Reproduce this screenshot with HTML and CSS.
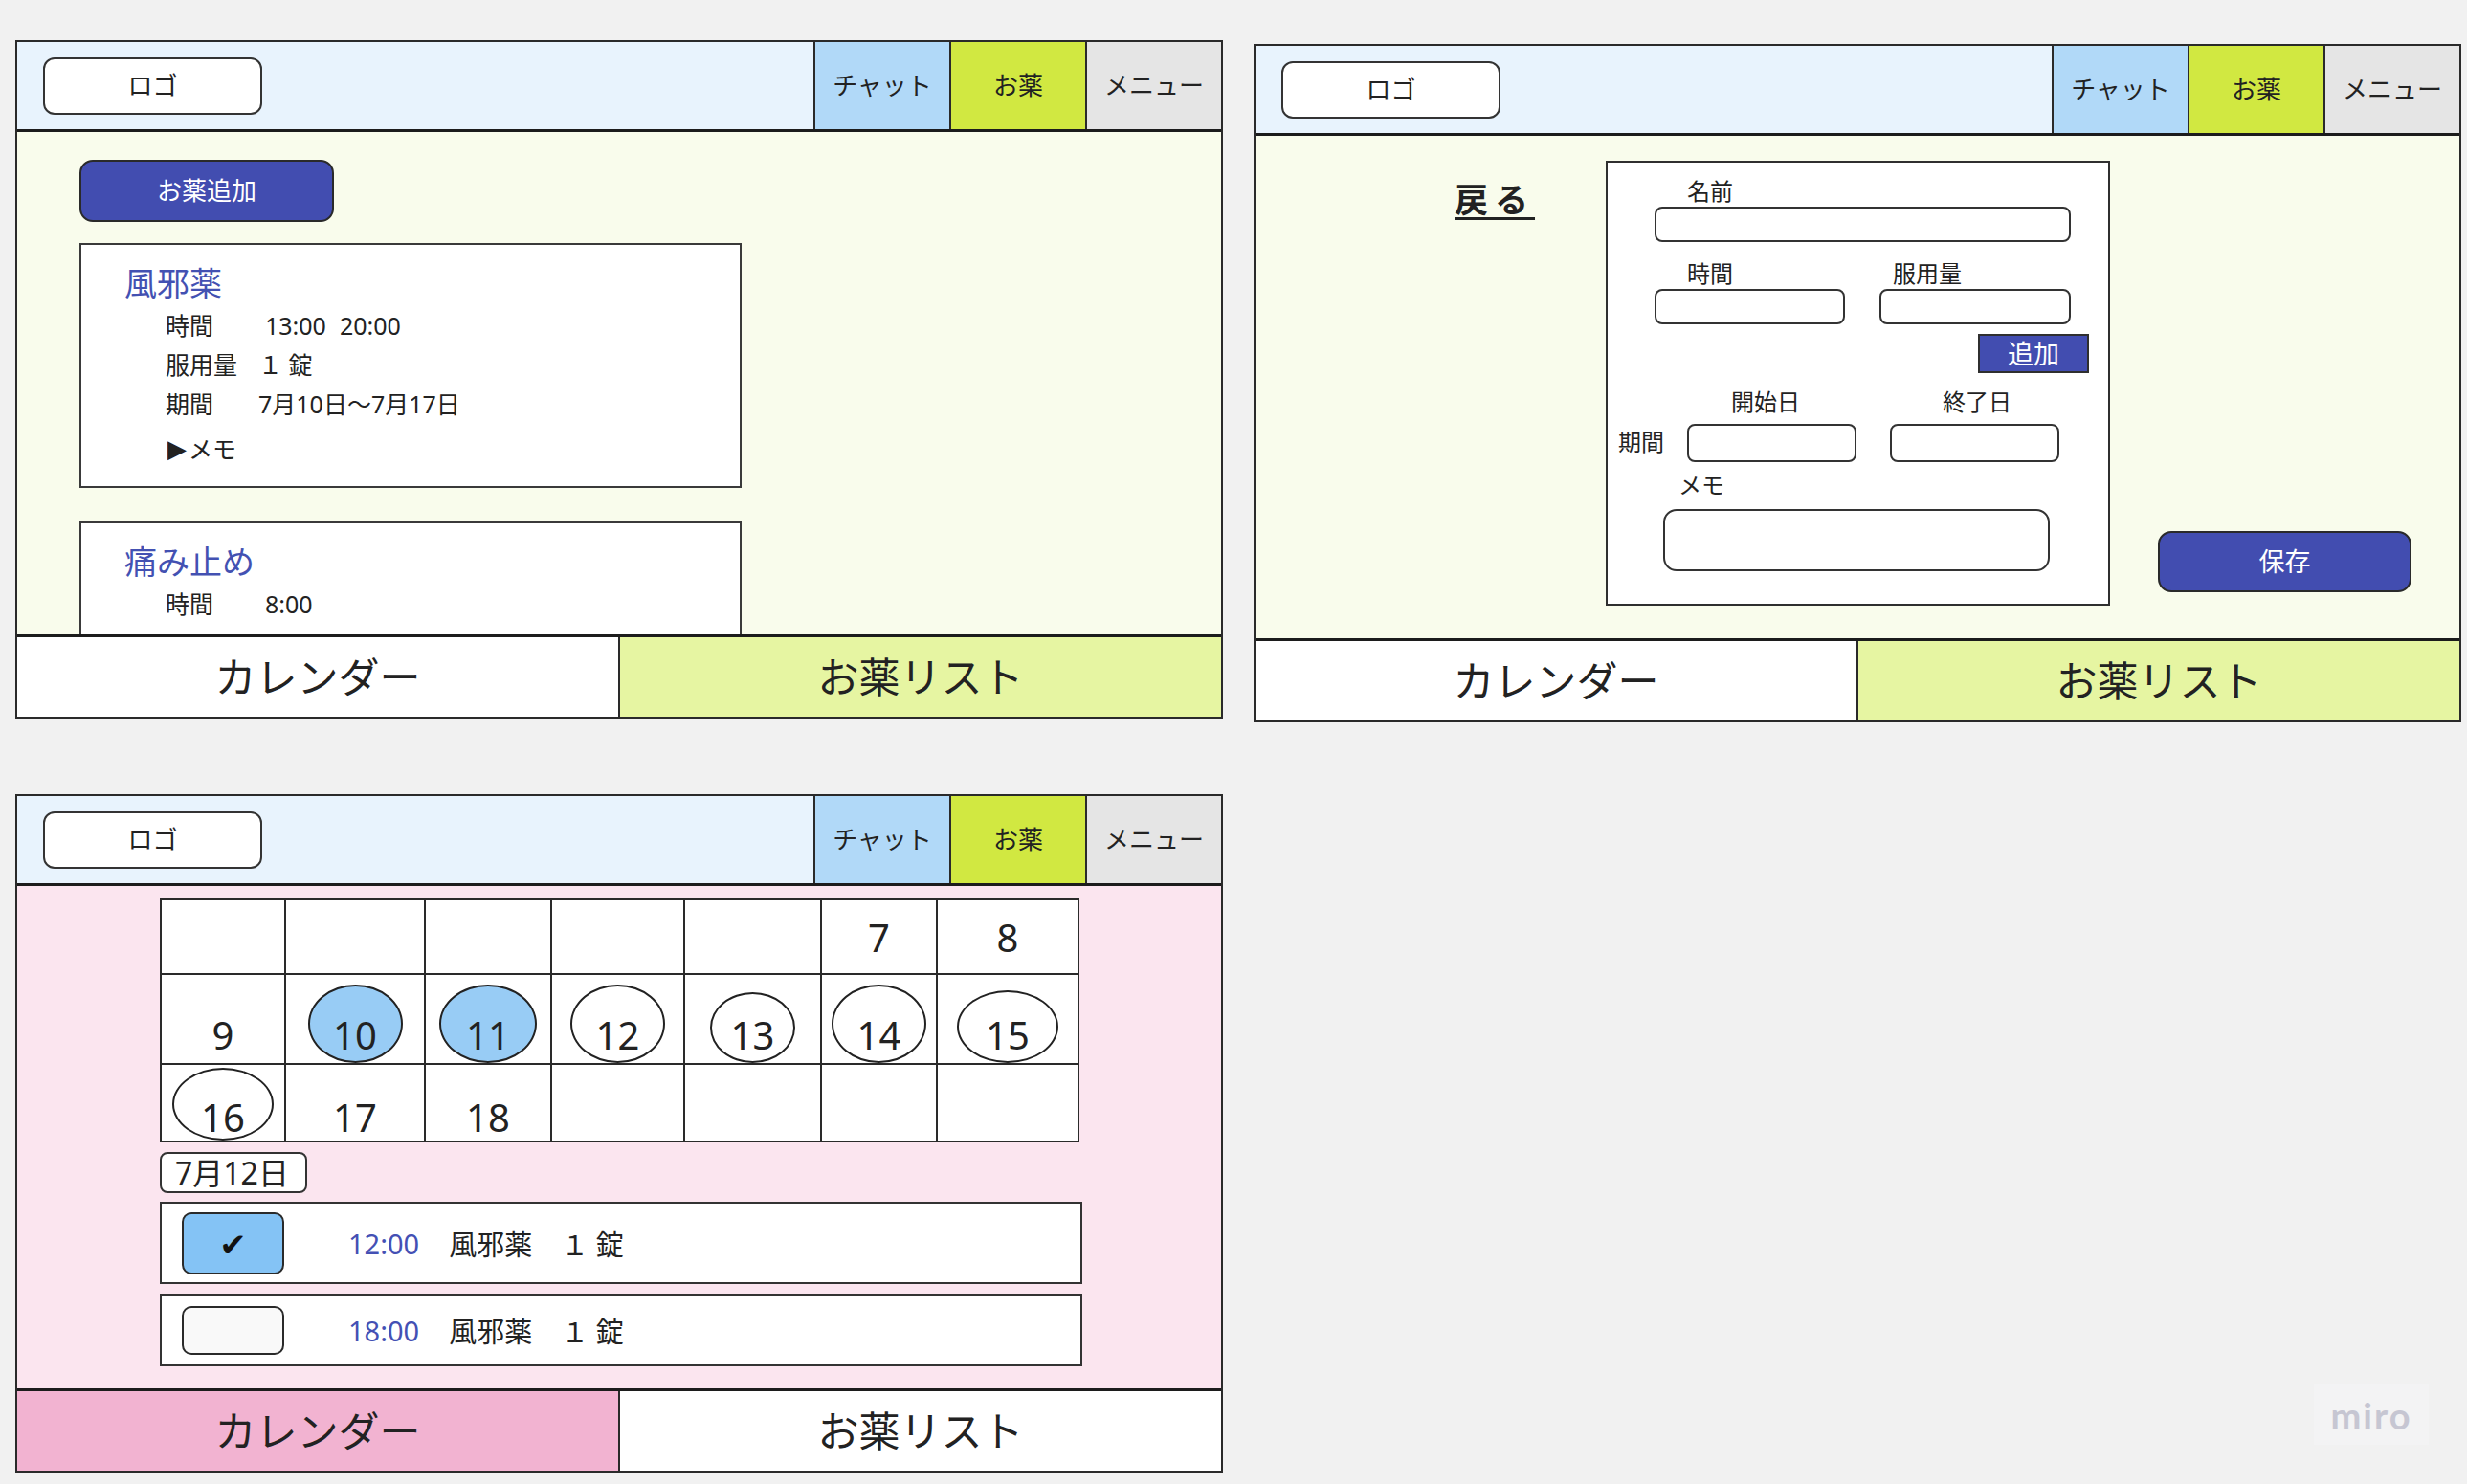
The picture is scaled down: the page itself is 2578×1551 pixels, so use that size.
FILE: index.html
```html
<!DOCTYPE html>
<html lang="ja">
<head>
<meta charset="utf-8">
<title>お薬アプリ ワイヤーフレーム</title>
<link rel="stylesheet" href="styles.css">
</head>
<body>
<div class="board">

  <section class="frame">
    <header class="hdr">
      <div class="logo-wrap"><div class="logo">ロゴ</div></div>
      <div class="tab tab-chat">チャット</div>
      <div class="tab tab-med">お薬</div>
      <div class="tab tab-menu">メニュー</div>
    </header>
    <div class="main main-list">
      <div class="add-btn">お薬追加</div>
      <div class="card">
        <div class="card-title">風邪薬</div>
        <div class="row"><span class="lbl">時間</span><span class="v1">13:00</span><span class="v2">20:00</span></div>
        <div class="row"><span class="lbl">服用量</span><span class="v3">１ 錠</span></div>
        <div class="row"><span class="lbl">期間</span><span>7月10日〜7月17日</span></div>
        <div class="row memo"><span class="tri">▶</span><span>メモ</span></div>
      </div>
      <div class="card card-2">
        <div class="card-title">痛み止め</div>
        <div class="row"><span class="lbl">時間</span><span class="v1">8:00</span></div>
      </div>
    </div>
    <nav class="nav">
      <div class="nav-item">カレンダー</div>
      <div class="nav-item nav-on-green">お薬リスト</div>
    </nav>
  </section>

  <section class="frame frame-form">
    <header class="hdr">
      <div class="logo-wrap"><div class="logo">ロゴ</div></div>
      <div class="tab tab-chat">チャット</div>
      <div class="tab tab-med">お薬</div>
      <div class="tab tab-menu">メニュー</div>
    </header>
    <div class="main main-form">
      <div class="back">戻る</div>
      <div class="form">
        <div class="fl name-lbl">名前</div>
        <div class="inp name-inp"></div>
        <div class="pair">
          <div class="col col1"><div class="fl">時間</div><div class="inp"></div></div>
          <div class="col col2"><div class="fl">服用量</div><div class="inp"></div></div>
        </div>
        <div class="add-small">追加</div>
        <div class="period">
          <div class="p-lbl">期間</div>
          <div class="pcol pcol1"><div class="fl">開始日</div><div class="inp inp-date"></div></div>
          <div class="pcol pcol2"><div class="fl">終了日</div><div class="inp inp-date"></div></div>
        </div>
        <div class="fl memo-lbl">メモ</div>
        <div class="inp memo-box"></div>
      </div>
      <div class="save">保存</div>
    </div>
    <nav class="nav">
      <div class="nav-item">カレンダー</div>
      <div class="nav-item nav-on-green">お薬リスト</div>
    </nav>
  </section>

  <section class="frame">
    <header class="hdr">
      <div class="logo-wrap"><div class="logo">ロゴ</div></div>
      <div class="tab tab-chat">チャット</div>
      <div class="tab tab-med">お薬</div>
      <div class="tab tab-menu">メニュー</div>
    </header>
    <div class="main main-cal">
      <div class="cal">
        <div class="cell r1"></div>
        <div class="cell r1"></div>
        <div class="cell r1"></div>
        <div class="cell r1"></div>
        <div class="cell r1"></div>
        <div class="cell r1">7</div>
        <div class="cell r1">8</div>

        <div class="cell r2">9</div>
        <div class="cell r2 rc"><span class="ring fill">10</span></div>
        <div class="cell r2 rc"><span class="ring fill ring-11">11</span></div>
        <div class="cell r2 rc"><span class="ring">12</span></div>
        <div class="cell r2 rc"><span class="ring ring-sm">13</span></div>
        <div class="cell r2 rc"><span class="ring">14</span></div>
        <div class="cell r2 rc"><span class="ring ring-wide">15</span></div>

        <div class="cell r3 rc"><span class="ring ring-wide ring-16">16</span></div>
        <div class="cell r3">17</div>
        <div class="cell r3">18</div>
        <div class="cell r3"></div>
        <div class="cell r3"></div>
        <div class="cell r3"></div>
        <div class="cell r3"></div>
      </div>
      <div class="date">7月12日</div>
      <div class="dose">
        <div class="chk on">✔</div>
        <span class="time">12:00</span><span class="dname">風邪薬</span><span class="qty">１ 錠</span>
      </div>
      <div class="dose dose-2">
        <div class="chk off"></div>
        <span class="time">18:00</span><span class="dname">風邪薬</span><span class="qty">１ 錠</span>
      </div>
    </div>
    <nav class="nav">
      <div class="nav-item nav-on-pink">カレンダー</div>
      <div class="nav-item">お薬リスト</div>
    </nav>
  </section>

</div>
<div class="miro">miro</div>
</body>
</html>
```

FILE: styles.css
```css
html, body {
  margin: 0;
  padding: 0;
}
body {
  background: #f1f1f1;
  font-family: "Noto Sans", "Noto Sans CJK JP", sans-serif;
  color: #222;
  width: 2578px;
  height: 1551px;
  position: relative;
  overflow: hidden;
}

.board {
  display: grid;
  grid-template-columns: 1262px 1262px;
  column-gap: 32px;
  row-gap: 75px;
  padding: 42px 0 0 16px;
  align-items: start;
}

.frame {
  height: 709px;
  box-sizing: border-box;
  border: 2px solid #2a2a2a;
  display: flex;
  flex-direction: column;
  overflow: hidden;
}
.frame-form {
  margin-top: 4px;
}

/* header */
.hdr {
  flex: none;
  height: 94px;
  box-sizing: border-box;
  border-bottom: 3px solid #1c1c1c;
  background: #e8f3fd;
  display: flex;
}
.logo-wrap {
  flex: 1;
  display: flex;
  align-items: center;
  padding-left: 27px;
}
.logo {
  width: 229px;
  height: 60px;
  box-sizing: border-box;
  border: 2px solid #333;
  border-radius: 12px;
  background: #fff;
  display: flex;
  align-items: center;
  justify-content: center;
  font-size: 26px;
  padding-bottom: 3px;
}
.tab {
  width: 142px;
  box-sizing: border-box;
  border-left: 2px solid #2a2a2a;
  display: flex;
  align-items: center;
  justify-content: center;
  font-size: 26px;
  padding-bottom: 4px;
}
.tab-chat { background: #b1d9f8; }
.tab-med { background: #d1e841; }
.tab-menu { background: #e5e5e5; }

/* main */
.main {
  flex: none;
  height: 525px;
  overflow: hidden;
  box-sizing: border-box;
}

/* bottom nav */
.nav {
  flex: 1;
  display: flex;
  border-top: 3px solid #1c1c1c;
}
.nav-item {
  flex: 1;
  display: flex;
  align-items: center;
  justify-content: center;
  font-size: 43px;
  background: #fff;
  padding-bottom: 5px;
}
.nav-item + .nav-item {
  border-left: 2px solid #2a2a2a;
}
.nav-on-green { background: #e6f5a2; }
.nav-on-pink { background: #f2b3d1; }

/* ---------- list screen ---------- */
.main-list {
  background: #f9fcec;
  padding: 29px 0 0 65px;
}
.add-btn {
  width: 266px;
  height: 65px;
  box-sizing: border-box;
  border: 2px solid #2a2a2a;
  border-radius: 14px;
  background: #424db0;
  color: #fff;
  font-size: 26px;
  display: flex;
  align-items: center;
  justify-content: center;
  padding-bottom: 3px;
}
.card {
  width: 692px;
  box-sizing: border-box;
  margin-top: 22px;
  border: 2px solid #3a3a3a;
  background: #fff;
  padding: 18px 0 18px 45px;
}
.card-2 {
  margin-top: 35px;
  height: 300px;
}
.card-title {
  font-size: 34px;
  line-height: 44px;
  color: #4351b2;
  margin-bottom: 2px;
}
.row {
  display: flex;
  font-size: 25px;
  line-height: 41px;
  padding-left: 43px;
}
.lbl {
  width: 97px;
  flex: none;
}
.v1 { margin-left: 7px; }
.v2 { margin-left: 14px; }
.v3 { margin-left: 0; }
.row.memo { margin-top: 6px; padding-left: 45px; }
.tri { font-size: 26px; font-family: "DejaVu Sans", sans-serif; margin-right: 2px; }

/* ---------- form screen ---------- */
.main-form {
  background: #f9fcec;
  display: flex;
  align-items: flex-start;
}
.back {
  flex: none;
  width: 84px;
  margin-left: 208px;
  margin-top: 45px;
  font-size: 35px;
  line-height: 44px;
  font-weight: 700;
  letter-spacing: 7px;
  white-space: nowrap;
  text-decoration: underline;
  text-decoration-thickness: 3px;
  text-underline-offset: 5px;
}
.form {
  flex: none;
  width: 527px;
  height: 465px;
  box-sizing: border-box;
  margin-left: 74px;
  margin-top: 26px;
  border: 2px solid #2f2f2f;
  background: #fff;
  padding-top: 16px;
}
.fl {
  font-size: 24px;
  line-height: 28px;
}
.inp {
  box-sizing: border-box;
  border: 2px solid #333;
  border-radius: 8px;
  background: #fff;
  height: 37px;
}
.name-lbl { margin-left: 83px; }
.name-inp {
  margin-left: 49px;
  margin-top: 2px;
  width: 435px;
}
.pair {
  display: flex;
  margin-top: 19px;
  margin-left: 49px;
  gap: 36px;
}
.col .fl { margin-bottom: 2px; }
.col1 { width: 199px; }
.col1 .fl { padding-left: 34px; }
.col2 { width: 200px; }
.col2 .fl { padding-left: 14px; }
.add-small {
  width: 116px;
  height: 41px;
  box-sizing: border-box;
  margin-left: 387px;
  margin-top: 10px;
  border: 2px solid #2f2f2f;
  background: #424db0;
  color: #fff;
  font-size: 27px;
  display: flex;
  align-items: center;
  justify-content: center;
  padding-bottom: 2px;
}
.period {
  display: flex;
  align-items: flex-end;
  margin-top: 16px;
}
.p-lbl {
  margin-left: 11px;
  width: 48px;
  height: 40px;
  line-height: 38px;
  font-size: 24px;
}
.pcol { width: 177px; }
.pcol .fl { margin-bottom: 9px; }
.pcol1 { margin-left: 24px; }
.pcol1 .fl { padding-left: 46px; }
.pcol2 { margin-left: 35px; }
.pcol2 .fl { padding-left: 55px; }
.inp-date { height: 40px; }
.memo-lbl {
  margin-left: 74px;
  margin-top: 10px;
}
.memo-box {
  margin-left: 58px;
  margin-top: 11px;
  width: 404px;
  height: 65px;
  border-radius: 14px;
}
.save {
  flex: none;
  align-self: flex-end;
  width: 265px;
  height: 64px;
  box-sizing: border-box;
  margin-left: 50px;
  margin-bottom: 48px;
  border: 2px solid #2a2a2a;
  border-radius: 14px;
  background: #424db0;
  color: #fff;
  font-size: 27px;
  display: flex;
  align-items: center;
  justify-content: center;
  padding-bottom: 3px;
}

/* ---------- calendar screen ---------- */
.main-cal {
  background: #fbe5ef;
  padding: 13px 0 0 149px;
}
.cal {
  display: grid;
  grid-template-columns: 130px 146px 132px 139px 143px 121px 148px;
  grid-template-rows: 78px 94px 81px;
  width: max-content;
  border-top: 2px solid #2a2a2a;
  border-left: 2px solid #2a2a2a;
  background: #fff;
}
.cell {
  box-sizing: border-box;
  border-right: 2px solid #2a2a2a;
  border-bottom: 2px solid #2a2a2a;
  display: flex;
  justify-content: center;
  align-items: flex-end;
  font-size: 40px;
  line-height: 40px;
}
.r1 { padding-bottom: 17px; }
.r2 { padding-bottom: 9px; }
.r3 { padding-bottom: 4px; }
.cell.rc { padding-bottom: 0; }
.ring {
  box-sizing: border-box;
  width: 99px;
  height: 82px;
  border: 2px solid #222;
  border-radius: 50%;
  background: #fff;
  display: flex;
  align-items: flex-end;
  justify-content: center;
  padding-bottom: 7px;
}
.ring.fill { background: #98ccf5; }
.ring-11 { width: 102px; }
.ring-sm { width: 89px; height: 74px; }
.ring-wide { width: 106px; height: 76px; }
.ring-16 { padding-bottom: 2px; }

.date {
  width: fit-content;
  margin-top: 10px;
  box-sizing: border-box;
  border: 2px solid #333;
  border-radius: 8px;
  background: #fff;
  font-size: 32px;
  line-height: 39px;
  padding: 0 17px 0 14px;
}
.dose {
  width: 964px;
  height: 86px;
  box-sizing: border-box;
  margin-top: 9px;
  border: 2px solid #333;
  background: #fff;
  display: flex;
  align-items: center;
  padding-left: 21px;
  font-size: 29px;
}
.dose-2 {
  height: 76px;
  margin-top: 10px;
}
.chk {
  flex: none;
  width: 107px;
  height: 65px;
  box-sizing: border-box;
  border: 2px solid #2a2a2a;
  border-radius: 10px;
  display: flex;
  align-items: center;
  justify-content: center;
}
.chk.on {
  background: #84c3f5;
  font-family: "DejaVu Sans", sans-serif;
  font-size: 34px;
  color: #111;
  padding-top: 4px;
}
.chk.off {
  height: 51px;
  background: #f9f9f9;
}
.time {
  margin-left: 67px;
  color: #4450b4;
}
.dname { margin-left: 31px; }
.qty { margin-left: 30px; }

/* watermark overlay */
.miro {
  position: absolute;
  left: 2418px;
  top: 1447px;
  width: 120px;
  height: 63px;
  background: #f3f3f4;
  color: #c6c6d2;
  font-family: "Lato", "Open Sans", sans-serif;
  font-weight: 700;
  font-size: 38px;
  letter-spacing: 2px;
  display: flex;
  align-items: center;
  justify-content: center;
}
```
